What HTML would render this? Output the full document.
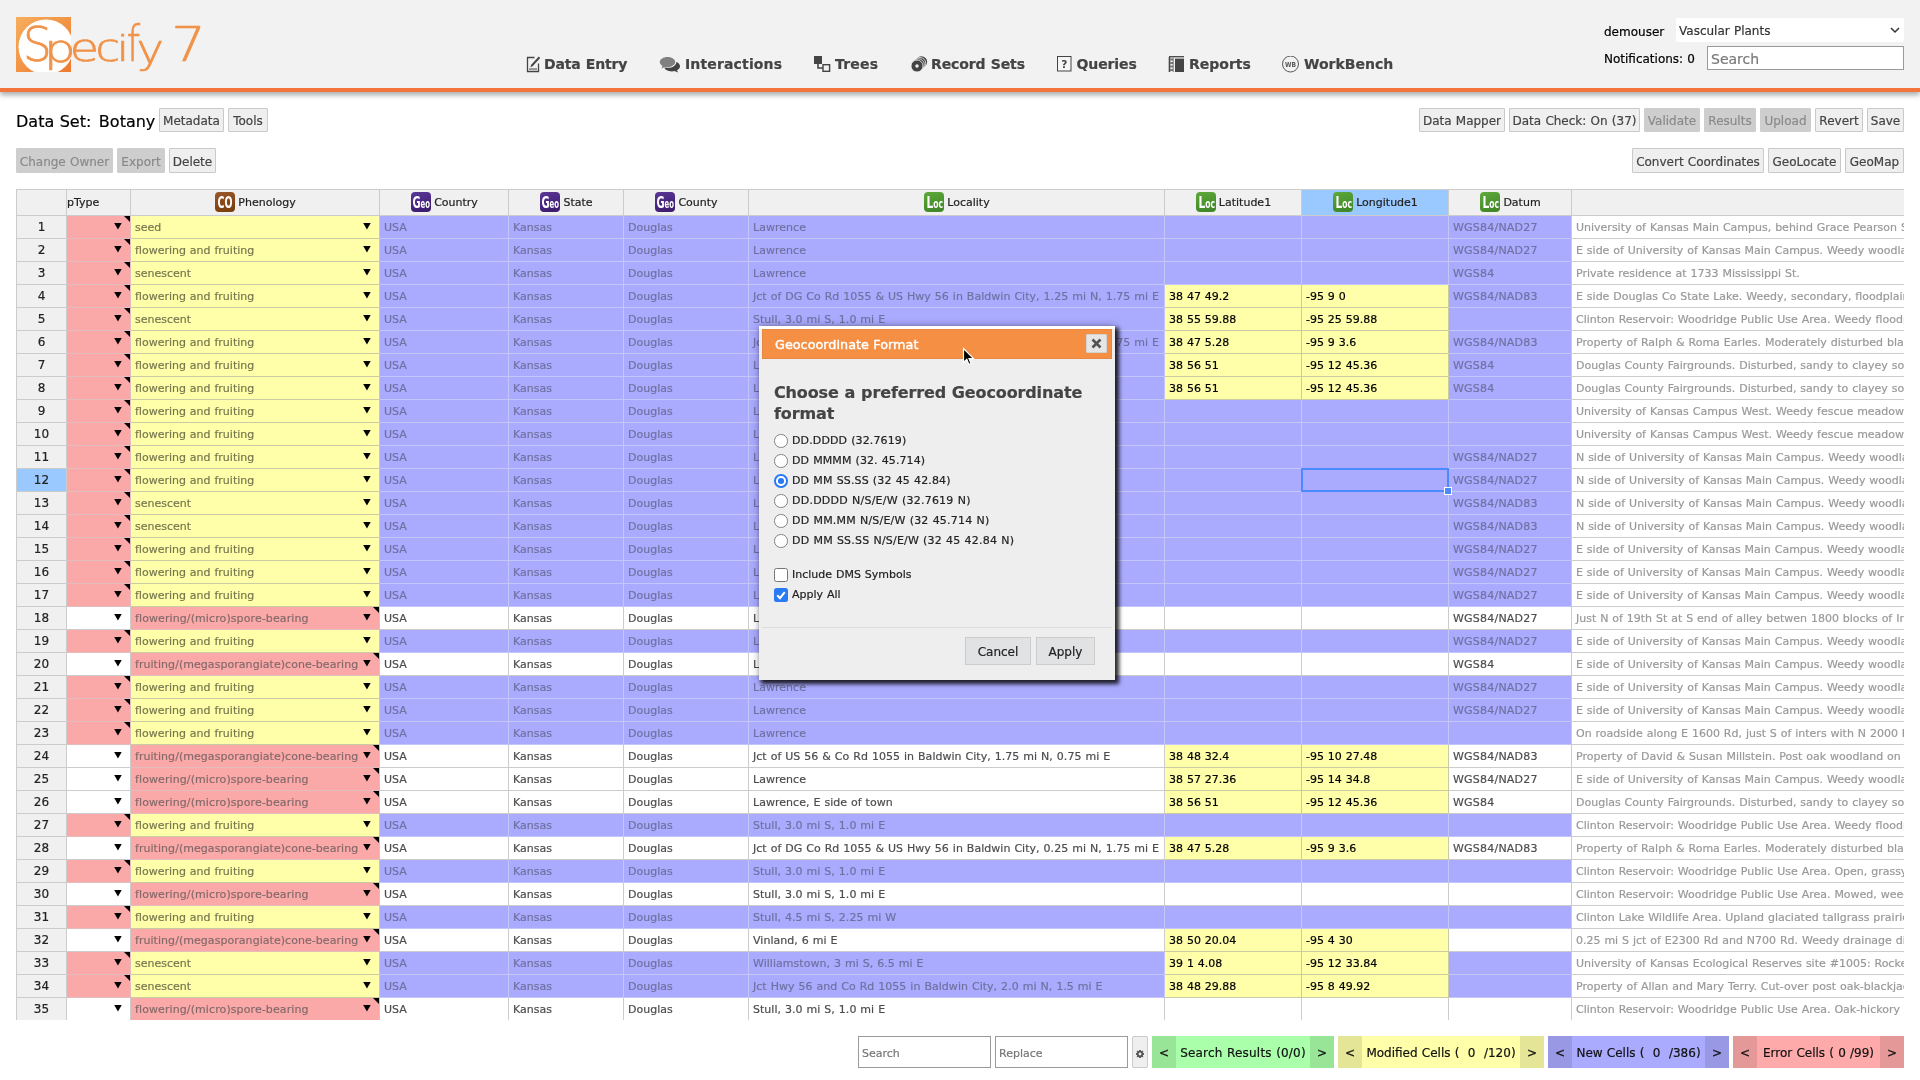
<!DOCTYPE html>
<html lang="en"><head><meta charset="utf-8"><title>Botany | Specify 7 WorkBench</title>
<style>
*{box-sizing:border-box}
html,body{margin:0;padding:0}
body{width:1920px;height:1080px;overflow:hidden;background:#fff;font-family:"DejaVu Sans","Liberation Sans",sans-serif;font-size:12px;color:#000;position:relative;word-spacing:.034em;-webkit-text-stroke:.2px}
#root{position:absolute;left:0;top:0;width:1920px;height:1080px;overflow:hidden;will-change:transform}
#hdr{position:absolute;left:0;top:0;width:1920px;height:92px;background:#f2f2f2;border-bottom:4px solid #f4753b;box-shadow:0 3px 5px rgba(60,70,70,.45)}
#logo{position:absolute;left:16px;top:17px}
#nav{position:absolute;top:53px;left:0;width:1920px;height:22px;font-weight:bold;font-size:14px;color:#444}
#nav a{position:absolute;top:0;line-height:22px;white-space:nowrap}
#nav svg{position:absolute;top:3px}
#user{position:absolute;font-size:12px}
.btn{position:absolute;height:24px;line-height:22px;border:1px solid #c9c9c9;background:#efefef;color:#444;font-size:12px;text-align:center;white-space:nowrap;border-radius:1px}
.btn.dis{background:#cecece;color:#8a8a8a;border-color:#cecece}
#title{position:absolute;left:16px;top:109px;font-size:16px;line-height:26px;white-space:nowrap}
/* grid */
#grid{position:absolute;left:16px;top:189px;width:1888px;height:831px;overflow:hidden}
table{border-collapse:separate;border-spacing:0;table-layout:fixed;width:2100px;font-size:11px}
th,td{height:23px;padding:0 4px;border-right:1px solid #ccc;border-bottom:1px solid #ccc;overflow:hidden;white-space:nowrap;text-align:left;font-weight:normal;line-height:21px;position:relative}
thead th{height:27px;background:#f0f0f0;border-top:1px solid #ccc;text-align:center;color:#222;line-height:25px}
th.rh{background:#f0f0f0;text-align:center;border-left:1px solid #ccc;font-size:12px;color:#222;padding:0}
th.rh.sel{background:#99c9ff}
thead th.selc{background:#99c9ff}
tr.n td{background:#aaaaff;color:#6f72a0;border-color:#c4c6f8}
tr.w td{background:#fff;color:#4d4d4d}
tr td.mo{background:#ffffaa;color:#77774f;border-color:#cbcba3}
tr td.er{background:#faa9a8;color:#856a6a;border-color:#e3bdbd}
tr td.k{color:#000}
tr td.ro{background:#fff;color:#999;border-color:#ccc}
td.dd i{position:absolute;right:8.3px;top:6.9px;width:7.5px;height:6.7px;background:#000;clip-path:polygon(0 0,100% 0,50% 100%)}
td.er:after{content:"";position:absolute;right:0;top:0;border-left:6px solid transparent;border-top:6px solid #000}
td.dt{letter-spacing:.22px}td.lc{letter-spacing:.035px}td.mic{letter-spacing:.1px}td.meg{letter-spacing:.05px}
.ic{display:inline-block;vertical-align:middle;margin-left:1px;margin-right:3px;position:relative;top:-1px}
#selbox{position:absolute;left:1301px;top:468px;width:148px;height:24px;border:2px solid #4b89ff}
#selh{position:absolute;left:1444px;top:487px;width:8px;height:8px;background:#4b89ff;border:1px solid #fff}

#uname{position:absolute;left:1604px;top:24px;font-size:12px;line-height:16px}
#coll{position:absolute;left:1676px;top:18px;width:228px;height:24px;background:#fff;border-radius:2px;font-size:12px;line-height:26px;padding-left:3px;color:#333}
#coll svg{position:absolute;right:4px;top:9px}
#notif{position:absolute;left:1604px;top:51px;font-size:12px;line-height:16px}
#hsearch{position:absolute;left:1707px;top:46px;width:197px;height:24px;background:#fff;border:1px solid #9a9a9a;font-size:14px;line-height:24px;padding-left:3px;color:#7a7a7a}
#bar{position:absolute;left:0;top:1036px;width:1920px;height:32px}
.inp{position:absolute;top:0;height:32px;background:#fff;border:1px solid #9a9a9a;font-size:11px;line-height:34px;padding-left:3px;color:#777}
.nv{position:absolute;top:0;height:32px;font-size:12px;line-height:34px;white-space:nowrap;text-align:center;color:#111}
.nv b{position:absolute;top:0;width:24px;height:32px;font-weight:normal;background:rgba(0,0,0,.1)}
.nv b.l{left:0}.nv b.r{right:0}
#dlg{position:absolute;left:759px;top:326px;width:356px;height:354px;background:#eee;box-shadow:3px 3px 4px 1px rgba(0,0,0,.8),0 0 8px rgba(0,0,0,.3);border-top:3px solid #fff}
#dlgt{position:absolute;left:3px;top:0;width:350px;height:30px;background:#f58f43;border:1px solid #e98845;color:#fff;font-size:12.8px;line-height:29px;padding-left:12px;-webkit-text-stroke:.4px}
#dlgx{position:absolute;left:323px;top:4px;width:21px;height:19px;background:#e6e6e6;border:1px solid #d3d3d3;border-radius:1px}
#dlg h2{position:absolute;left:15px;top:53px;margin:0;font-size:16px;line-height:21px;font-weight:bold;color:#444;width:330px;letter-spacing:-.13px}
.opt{position:absolute;left:33px;font-size:11px;line-height:14px;color:#222;white-space:nowrap}
.rad{position:absolute;left:15px;width:13.500px;height:13.500px;border-radius:50%;border:1.400px solid #808080;background:#fff}
.rad.on{border:2px solid #2a7af5}
.rad.on:after{content:"";position:absolute;left:2px;top:2px;width:5.500px;height:5.500px;border-radius:50%;background:#2a7af5}
.chk{position:absolute;left:15px;width:14px;height:14px;border-radius:2.5px;border:1.5px solid #777;background:#fff}
.chk.on{border:none;background:#2a7af5}
#dlgl{position:absolute;left:3px;top:298px;width:350px;height:1px;background:#ddd}
.dbtn{position:absolute;top:308px;height:28px;border:1px solid #ccc;background:#e1e2e3;color:#222;font-size:12px;line-height:28px;text-align:center}
</style></head><body><div id="root">
<div id="hdr">
<svg id="logo" width="200" height="60" viewBox="0 0 200 60">
<defs><linearGradient id="lg" x1="0" y1="0" x2="1" y2="1"><stop offset="0" stop-color="#f6ae5c"/><stop offset="1" stop-color="#ee7a30"/></linearGradient><clipPath id="lc"><rect x="0" y="0" width="55" height="55"/></clipPath></defs>
<rect x="0" y="0" width="55" height="55" fill="url(#lg)"/>
<circle cx="30" cy="30" r="27.5" fill="#fff" clip-path="url(#lc)"/>
<text font-family="'DejaVu Sans Light','DejaVu Sans',sans-serif" font-weight="200" fill="#f0934a" stroke="#f0934a" stroke-width="0.7"><tspan x="7.1" y="44.0" font-size="47.2" textLength="28.7" lengthAdjust="spacingAndGlyphs">S</tspan><tspan x="28.1" y="45.2" font-size="39.2" textLength="31.6" lengthAdjust="spacingAndGlyphs">p</tspan><tspan x="53.7" y="43.9" font-size="37.0" textLength="29.3" lengthAdjust="spacingAndGlyphs">e</tspan><tspan x="79.4" y="43.9" font-size="37.0" textLength="24.6" lengthAdjust="spacingAndGlyphs">c</tspan><tspan x="100.6" y="44.0" font-size="36.3" textLength="12.8" lengthAdjust="spacingAndGlyphs">i</tspan><tspan x="110.8" y="44.0" font-size="49.3" textLength="13.4" lengthAdjust="spacingAndGlyphs">f</tspan><tspan x="120.4" y="45.7" font-size="40.3" textLength="27.5" lengthAdjust="spacingAndGlyphs">y</tspan> <tspan x="155.2" y="44.0" font-size="47.9" textLength="34.6" lengthAdjust="spacingAndGlyphs">7</tspan></text>
</svg>
<div id="nav">
<svg style="left:526px" width="15" height="17" viewBox="0 0 15 17"><path d="M8.5 1.5H1.5v14h11V7.5" fill="none" stroke="#444" stroke-width="1.3"/><path d="M12.8 0.6l1.4 1.4-7.6 8.2-2.3 1 .9-2.4z" fill="#444"/><rect x="3" y="12" width="8" height="2" fill="#999"/></svg>
<a style="left:544px;letter-spacing:-.15px">Data Entry</a>
<svg style="left:659px" width="22" height="17" viewBox="0 0 22 17"><path d="M13 5c4.4 0 8 2.3 8 5.2 0 1.7-1.2 3.200-3.100 4.100l1.300 2.200-3.900-1.400c-.8.200-1.500.300-2.300.300-4.400 0-8-2.300-8-5.200s3.600-5.200 8-5.200z" fill="#444"/><path d="M8.700 0c4.800 0 8.700 2.600 8.700 5.900s-3.900 5.900-8.700 5.900c-1 0-2-.100-2.900-.300l-3.500 1.800 1-2.900c-2-1.100-3.300-2.700-3.300-4.500 0-3.300 3.900-5.900 8.700-5.900z" fill="#f2f2f2"/><path d="M8.500 1c4.200 0 7.700 2.300 7.700 5.100s-3.500 5.100-7.700 5.100c-1 0-1.900-.100-2.700-.300l-3.400 1.700 1.100-2.700c-1.700-.9-2.700-2.300-2.700-3.800 0-2.800 3.500-5.100 7.700-5.100z" fill="#808080"/></svg>
<a style="left:685px;letter-spacing:.15px">Interactions</a>
<svg style="left:814px" width="17" height="17" viewBox="0 0 17 17"><rect x="0" y="0" width="8" height="8" fill="#444"/><path d="M4 8v4h5" fill="none" stroke="#444" stroke-width="1.6"/><rect x="9" y="8.700" width="6.600" height="6.600" fill="#f2f2f2" stroke="#444" stroke-width="1.400"/></svg>
<a style="left:835px;letter-spacing:.2px">Trees</a>
<svg style="left:910px" width="18" height="17" viewBox="0 0 18 17"><circle cx="11.400" cy="6" r="5.800" fill="#444"/><circle cx="10" cy="7.300" r="5.800" fill="#444" stroke="#f2f2f2" stroke-width=".8"/><circle cx="8.500" cy="8.600" r="5.800" fill="#444" stroke="#f2f2f2" stroke-width=".8"/><circle cx="7" cy="10" r="6" fill="#444" stroke="#f2f2f2" stroke-width=".8"/><circle cx="7" cy="10" r="1.700" fill="#f2f2f2"/></svg>
<a style="left:931px;letter-spacing:-.1px">Record Sets</a>
<svg style="left:1057px" width="15" height="16" viewBox="0 0 15 16"><rect x=".5" y=".5" width="13.500" height="14.500" fill="#f5f5f5" stroke="#444" stroke-width="1"/><text x="7.200" y="12" font-family="'DejaVu Sans',sans-serif" font-weight="bold" font-size="10.500" fill="#444" text-anchor="middle">?</text></svg>
<a style="left:1076.500px;letter-spacing:-.1px">Queries</a>
<svg style="left:1168px" width="17" height="17" viewBox="0 0 17 17"><path d="M1 .700h15" stroke="#444" stroke-width="1.300"/><rect x="7" y="2.600" width="9" height="13.400" fill="#444"/><path d="M1.500 1v15" stroke="#444" stroke-width="1.600"/><path d="M1 3.500h4.500M1 7h4.500M1 10.500h4.500M1 14h4.500" stroke="#444" stroke-width="1.800" stroke-dasharray="1.500 .8"/><path d="M5.200 1.500v14.500" stroke="#777" stroke-width="1"/></svg>
<a style="left:1189px">Reports</a>
<svg style="left:1281px" width="19" height="19" viewBox="0 0 19 19" ><circle cx="9.500" cy="8" r="8" fill="none" stroke="#555" stroke-width="1"/><text x="9.500" y="10.600" font-family="'DejaVu Sans',sans-serif" font-weight="bold" font-size="6.800" fill="#555" text-anchor="middle" textLength="11" lengthAdjust="spacingAndGlyphs">WB</text></svg>
<a style="left:1304px">WorkBench</a>
</div>
<div id="uname">demouser</div>
<div id="coll">Vascular Plants<svg width="10" height="7" viewBox="0 0 10 7"><path d="M1 1l4 4 4-4" fill="none" stroke="#333" stroke-width="1.5"/></svg></div>
<div id="notif">Notifications: 0</div>
<div id="hsearch">Search</div>
</div>
<div id="title">Data Set<span style="letter-spacing:2px">:</span> Botany</div>
<div class="btn" style="left:159px;top:108px;height:24px;line-height:25px;width:65px">Metadata</div>
<div class="btn" style="left:228px;top:108px;height:24px;line-height:25px;width:40px">Tools</div>
<div class="btn" style="left:1419px;top:108px;height:24px;line-height:25px;width:86px">Data Mapper</div>
<div class="btn" style="left:1509px;top:108px;height:24px;line-height:25px;width:131px">Data Check: On (37)</div>
<div class="btn dis" style="left:1644px;top:108px;height:24px;line-height:25px;width:56px">Validate</div>
<div class="btn dis" style="left:1704px;top:108px;height:24px;line-height:25px;width:52px">Results</div>
<div class="btn dis" style="left:1760px;top:108px;height:24px;line-height:25px;width:51px">Upload</div>
<div class="btn" style="left:1815px;top:108px;height:24px;line-height:25px;width:48px">Revert</div>
<div class="btn" style="left:1867px;top:108px;height:24px;line-height:25px;width:37px">Save</div>
<div class="btn dis" style="left:16px;top:148px;height:25px;line-height:27px;width:97px">Change Owner</div>
<div class="btn dis" style="left:117px;top:148px;height:25px;line-height:27px;width:48px">Export</div>
<div class="btn" style="left:169px;top:148px;height:25px;line-height:27px;width:47px">Delete</div>
<div class="btn" style="left:1632px;top:148px;height:25px;line-height:27px;width:132px">Convert Coordinates</div>
<div class="btn" style="left:1768px;top:148px;height:25px;line-height:27px;width:73px">GeoLocate</div>
<div class="btn" style="left:1845px;top:148px;height:25px;line-height:27px;width:59px">GeoMap</div>
<div id="grid"><table>
<colgroup><col style="width:51px"><col style="width:64px"><col style="width:249px"><col style="width:129px"><col style="width:115px"><col style="width:125px"><col style="width:416px"><col style="width:137px"><col style="width:147px"><col style="width:123px"><col style="width:545px"></colgroup>
<thead><tr><th class="rh"></th><th style="text-align:left;padding:0">pType</th><th><svg class="ic" width="20" height="20" viewBox="0 0 20 20"><defs><linearGradient id="gCO1" x1="0" y1="0" x2="0.3" y2="1"><stop offset="0" stop-color="#99582a"/><stop offset="1" stop-color="#7d400f"/></linearGradient></defs><rect width="20" height="20" rx="4" fill="url(#gCO1)"/><text x="2.5" y="16" font-family="'DejaVu Sans Condensed','DejaVu Sans',sans-serif" font-weight="bold" fill="#fff" font-size="16.500" textLength="15" lengthAdjust="spacingAndGlyphs">CO</text></svg>Phenology</th><th><svg class="ic" width="20" height="20" viewBox="0 0 20 20"><defs><linearGradient id="gGeo1" x1="0" y1="0" x2="0.3" y2="1"><stop offset="0" stop-color="#5b3797"/><stop offset="1" stop-color="#3f1e72"/></linearGradient></defs><rect width="20" height="20" rx="4" fill="url(#gGeo1)"/><text x="1.5" y="16" font-family="'DejaVu Sans Condensed','DejaVu Sans',sans-serif" font-weight="bold" fill="#fff" font-size="16.500" textLength="17.500" lengthAdjust="spacingAndGlyphs">G<tspan font-size="11.500">eo</tspan></text></svg>Country</th><th><svg class="ic" width="20" height="20" viewBox="0 0 20 20"><defs><linearGradient id="gGeo2" x1="0" y1="0" x2="0.3" y2="1"><stop offset="0" stop-color="#5b3797"/><stop offset="1" stop-color="#3f1e72"/></linearGradient></defs><rect width="20" height="20" rx="4" fill="url(#gGeo2)"/><text x="1.5" y="16" font-family="'DejaVu Sans Condensed','DejaVu Sans',sans-serif" font-weight="bold" fill="#fff" font-size="16.500" textLength="17.500" lengthAdjust="spacingAndGlyphs">G<tspan font-size="11.500">eo</tspan></text></svg>State</th><th><svg class="ic" width="20" height="20" viewBox="0 0 20 20"><defs><linearGradient id="gGeo3" x1="0" y1="0" x2="0.3" y2="1"><stop offset="0" stop-color="#5b3797"/><stop offset="1" stop-color="#3f1e72"/></linearGradient></defs><rect width="20" height="20" rx="4" fill="url(#gGeo3)"/><text x="1.5" y="16" font-family="'DejaVu Sans Condensed','DejaVu Sans',sans-serif" font-weight="bold" fill="#fff" font-size="16.500" textLength="17.500" lengthAdjust="spacingAndGlyphs">G<tspan font-size="11.500">eo</tspan></text></svg>County</th><th><svg class="ic" width="20" height="20" viewBox="0 0 20 20"><defs><linearGradient id="gLoc1" x1="0" y1="0" x2="0.3" y2="1"><stop offset="0" stop-color="#5daa3a"/><stop offset="1" stop-color="#43892a"/></linearGradient></defs><rect width="20" height="20" rx="4" fill="url(#gLoc1)"/><text x="2.500" y="15.500" font-family="'DejaVu Sans Condensed','DejaVu Sans',sans-serif" font-weight="bold" fill="#fff" font-size="16" textLength="16.500" lengthAdjust="spacingAndGlyphs">L<tspan font-size="11.500">oc</tspan></text></svg>Locality</th><th><svg class="ic" width="20" height="20" viewBox="0 0 20 20"><defs><linearGradient id="gLoc2" x1="0" y1="0" x2="0.3" y2="1"><stop offset="0" stop-color="#5daa3a"/><stop offset="1" stop-color="#43892a"/></linearGradient></defs><rect width="20" height="20" rx="4" fill="url(#gLoc2)"/><text x="2.500" y="15.500" font-family="'DejaVu Sans Condensed','DejaVu Sans',sans-serif" font-weight="bold" fill="#fff" font-size="16" textLength="16.500" lengthAdjust="spacingAndGlyphs">L<tspan font-size="11.500">oc</tspan></text></svg>Latitude1</th><th class="selc"><svg class="ic" width="20" height="20" viewBox="0 0 20 20"><defs><linearGradient id="gLoc3" x1="0" y1="0" x2="0.3" y2="1"><stop offset="0" stop-color="#5daa3a"/><stop offset="1" stop-color="#43892a"/></linearGradient></defs><rect width="20" height="20" rx="4" fill="url(#gLoc3)"/><text x="2.500" y="15.500" font-family="'DejaVu Sans Condensed','DejaVu Sans',sans-serif" font-weight="bold" fill="#fff" font-size="16" textLength="16.500" lengthAdjust="spacingAndGlyphs">L<tspan font-size="11.500">oc</tspan></text></svg>Longitude1</th><th><svg class="ic" width="20" height="20" viewBox="0 0 20 20"><defs><linearGradient id="gLoc4" x1="0" y1="0" x2="0.3" y2="1"><stop offset="0" stop-color="#5daa3a"/><stop offset="1" stop-color="#43892a"/></linearGradient></defs><rect width="20" height="20" rx="4" fill="url(#gLoc4)"/><text x="2.500" y="15.500" font-family="'DejaVu Sans Condensed','DejaVu Sans',sans-serif" font-weight="bold" fill="#fff" font-size="16" textLength="16.500" lengthAdjust="spacingAndGlyphs">L<tspan font-size="11.500">oc</tspan></text></svg>Datum</th><th></th></tr></thead>
<tbody>
<tr class="n"><th class="rh">1</th><td class="er dd"><i></i></td><td class="mo dd seed">seed<i></i></td><td>USA</td><td>Kansas</td><td>Douglas</td><td class="lc">Lawrence</td><td></td><td></td><td class="dt">WGS84/NAD27</td><td class="ro">University of Kansas Main Campus, behind Grace Pearson Scholarship Hall</td></tr>
<tr class="n"><th class="rh">2</th><td class="er dd"><i></i></td><td class="mo dd ff">flowering and fruiting<i></i></td><td>USA</td><td>Kansas</td><td>Douglas</td><td class="lc">Lawrence</td><td></td><td></td><td class="dt">WGS84/NAD27</td><td class="ro">E side of University of Kansas Main Campus. Weedy woodland along ridge</td></tr>
<tr class="n"><th class="rh">3</th><td class="er dd"><i></i></td><td class="mo dd sen">senescent<i></i></td><td>USA</td><td>Kansas</td><td>Douglas</td><td class="lc">Lawrence</td><td></td><td></td><td class="dt">WGS84</td><td class="ro">Private residence at 1733 Mississippi St.</td></tr>
<tr class="n"><th class="rh">4</th><td class="er dd"><i></i></td><td class="mo dd ff">flowering and fruiting<i></i></td><td>USA</td><td>Kansas</td><td>Douglas</td><td class="lc">Jct of DG Co Rd 1055 &amp; US Hwy 56 in Baldwin City, 1.25 mi N, 1.75 mi E</td><td class="mo k">38 47 49.2</td><td class="mo k">-95 9 0</td><td class="dt">WGS84/NAD83</td><td class="ro">E side Douglas Co State Lake. Weedy, secondary, floodplain woodland</td></tr>
<tr class="n"><th class="rh">5</th><td class="er dd"><i></i></td><td class="mo dd sen">senescent<i></i></td><td>USA</td><td>Kansas</td><td>Douglas</td><td class="lc">Stull, 3.0 mi S, 1.0 mi E</td><td class="mo k">38 55 59.88</td><td class="mo k">-95 25 59.88</td><td class="dt"></td><td class="ro">Clinton Reservoir: Woodridge Public Use Area. Weedy floodplain woods</td></tr>
<tr class="n"><th class="rh">6</th><td class="er dd"><i></i></td><td class="mo dd ff">flowering and fruiting<i></i></td><td>USA</td><td>Kansas</td><td>Douglas</td><td class="lc">Jct of DG Co Rd 1055 &amp; US Hwy 56 in Baldwin City, 0.25 mi N, 1.75 mi E</td><td class="mo k">38 47 5.28</td><td class="mo k">-95 9 3.6</td><td class="dt">WGS84/NAD83</td><td class="ro">Property of Ralph &amp; Roma Earles. Moderately disturbed blackjack oak woods</td></tr>
<tr class="n"><th class="rh">7</th><td class="er dd"><i></i></td><td class="mo dd ff">flowering and fruiting<i></i></td><td>USA</td><td>Kansas</td><td>Douglas</td><td class="lc">Lawrence</td><td class="mo k">38 56 51</td><td class="mo k">-95 12 45.36</td><td class="dt">WGS84</td><td class="ro">Douglas County Fairgrounds. Disturbed, sandy to clayey soil along drive</td></tr>
<tr class="n"><th class="rh">8</th><td class="er dd"><i></i></td><td class="mo dd ff">flowering and fruiting<i></i></td><td>USA</td><td>Kansas</td><td>Douglas</td><td class="lc">Lawrence</td><td class="mo k">38 56 51</td><td class="mo k">-95 12 45.36</td><td class="dt">WGS84</td><td class="ro">Douglas County Fairgrounds. Disturbed, sandy to clayey soil along drive</td></tr>
<tr class="n"><th class="rh">9</th><td class="er dd"><i></i></td><td class="mo dd ff">flowering and fruiting<i></i></td><td>USA</td><td>Kansas</td><td>Douglas</td><td class="lc">Lawrence</td><td></td><td></td><td class="dt"></td><td class="ro">University of Kansas Campus West. Weedy fescue meadow and roadside</td></tr>
<tr class="n"><th class="rh">10</th><td class="er dd"><i></i></td><td class="mo dd ff">flowering and fruiting<i></i></td><td>USA</td><td>Kansas</td><td>Douglas</td><td class="lc">Lawrence</td><td></td><td></td><td class="dt"></td><td class="ro">University of Kansas Campus West. Weedy fescue meadow and roadside</td></tr>
<tr class="n"><th class="rh">11</th><td class="er dd"><i></i></td><td class="mo dd ff">flowering and fruiting<i></i></td><td>USA</td><td>Kansas</td><td>Douglas</td><td class="lc">Lawrence</td><td></td><td></td><td class="dt">WGS84/NAD27</td><td class="ro">N side of University of Kansas Main Campus. Weedy woodland along ridge</td></tr>
<tr class="n"><th class="rh sel">12</th><td class="er dd"><i></i></td><td class="mo dd ff">flowering and fruiting<i></i></td><td>USA</td><td>Kansas</td><td>Douglas</td><td class="lc">Lawrence</td><td></td><td class="cur"><b></b></td><td class="dt">WGS84/NAD27</td><td class="ro">N side of University of Kansas Main Campus. Weedy woodland along ridge</td></tr>
<tr class="n"><th class="rh">13</th><td class="er dd"><i></i></td><td class="mo dd sen">senescent<i></i></td><td>USA</td><td>Kansas</td><td>Douglas</td><td class="lc">Lawrence</td><td></td><td></td><td class="dt">WGS84/NAD83</td><td class="ro">N side of University of Kansas Main Campus. Weedy woodland along ridge</td></tr>
<tr class="n"><th class="rh">14</th><td class="er dd"><i></i></td><td class="mo dd sen">senescent<i></i></td><td>USA</td><td>Kansas</td><td>Douglas</td><td class="lc">Lawrence</td><td></td><td></td><td class="dt">WGS84/NAD83</td><td class="ro">N side of University of Kansas Main Campus. Weedy woodland along ridge</td></tr>
<tr class="n"><th class="rh">15</th><td class="er dd"><i></i></td><td class="mo dd ff">flowering and fruiting<i></i></td><td>USA</td><td>Kansas</td><td>Douglas</td><td class="lc">Lawrence</td><td></td><td></td><td class="dt">WGS84/NAD27</td><td class="ro">E side of University of Kansas Main Campus. Weedy woodland along ridge</td></tr>
<tr class="n"><th class="rh">16</th><td class="er dd"><i></i></td><td class="mo dd ff">flowering and fruiting<i></i></td><td>USA</td><td>Kansas</td><td>Douglas</td><td class="lc">Lawrence</td><td></td><td></td><td class="dt">WGS84/NAD27</td><td class="ro">E side of University of Kansas Main Campus. Weedy woodland along ridge</td></tr>
<tr class="n"><th class="rh">17</th><td class="er dd"><i></i></td><td class="mo dd ff">flowering and fruiting<i></i></td><td>USA</td><td>Kansas</td><td>Douglas</td><td class="lc">Lawrence</td><td></td><td></td><td class="dt">WGS84/NAD27</td><td class="ro">E side of University of Kansas Main Campus. Weedy woodland along ridge</td></tr>
<tr class="w"><th class="rh">18</th><td class=" dd"><i></i></td><td class="er dd mic">flowering/(micro)spore-bearing<i></i></td><td>USA</td><td>Kansas</td><td>Douglas</td><td class="lc">Lawrence</td><td></td><td></td><td class="dt">WGS84/NAD27</td><td class="ro">Just N of 19th St at S end of alley betwen 1800 blocks of Indiana and Mississippi</td></tr>
<tr class="n"><th class="rh">19</th><td class="er dd"><i></i></td><td class="mo dd ff">flowering and fruiting<i></i></td><td>USA</td><td>Kansas</td><td>Douglas</td><td class="lc">Lawrence</td><td></td><td></td><td class="dt">WGS84/NAD27</td><td class="ro">E side of University of Kansas Main Campus. Weedy woodland along ridge</td></tr>
<tr class="w"><th class="rh">20</th><td class=" dd"><i></i></td><td class="er dd meg">fruiting/(megasporangiate)cone-bearing<i></i></td><td>USA</td><td>Kansas</td><td>Douglas</td><td class="lc">Lawrence</td><td></td><td></td><td class="dt">WGS84</td><td class="ro">E side of University of Kansas Main Campus. Weedy woodland along ridge</td></tr>
<tr class="n"><th class="rh">21</th><td class="er dd"><i></i></td><td class="mo dd ff">flowering and fruiting<i></i></td><td>USA</td><td>Kansas</td><td>Douglas</td><td class="lc">Lawrence</td><td></td><td></td><td class="dt">WGS84/NAD27</td><td class="ro">E side of University of Kansas Main Campus. Weedy woodland along ridge</td></tr>
<tr class="n"><th class="rh">22</th><td class="er dd"><i></i></td><td class="mo dd ff">flowering and fruiting<i></i></td><td>USA</td><td>Kansas</td><td>Douglas</td><td class="lc">Lawrence</td><td></td><td></td><td class="dt">WGS84/NAD27</td><td class="ro">E side of University of Kansas Main Campus. Weedy woodland along ridge</td></tr>
<tr class="n"><th class="rh">23</th><td class="er dd"><i></i></td><td class="mo dd ff">flowering and fruiting<i></i></td><td>USA</td><td>Kansas</td><td>Douglas</td><td class="lc">Lawrence</td><td></td><td></td><td class="dt"></td><td class="ro">On roadside along E 1600 Rd, just S of inters with N 2000 Rd.</td></tr>
<tr class="w"><th class="rh">24</th><td class=" dd"><i></i></td><td class="er dd meg">fruiting/(megasporangiate)cone-bearing<i></i></td><td>USA</td><td>Kansas</td><td>Douglas</td><td class="lc">Jct of US 56 &amp; Co Rd 1055 in Baldwin City, 1.75 mi N, 0.75 mi E</td><td class="mo k">38 48 32.4</td><td class="mo k">-95 10 27.48</td><td class="dt">WGS84/NAD83</td><td class="ro">Property of David &amp; Susan Millstein. Post oak woodland on rocky slope</td></tr>
<tr class="w"><th class="rh">25</th><td class=" dd"><i></i></td><td class="er dd mic">flowering/(micro)spore-bearing<i></i></td><td>USA</td><td>Kansas</td><td>Douglas</td><td class="lc">Lawrence</td><td class="mo k">38 57 27.36</td><td class="mo k">-95 14 34.8</td><td class="dt">WGS84/NAD27</td><td class="ro">E side of University of Kansas Main Campus. Weedy woodland along ridge</td></tr>
<tr class="w"><th class="rh">26</th><td class=" dd"><i></i></td><td class="er dd mic">flowering/(micro)spore-bearing<i></i></td><td>USA</td><td>Kansas</td><td>Douglas</td><td class="lc">Lawrence, E side of town</td><td class="mo k">38 56 51</td><td class="mo k">-95 12 45.36</td><td class="dt">WGS84</td><td class="ro">Douglas County Fairgrounds. Disturbed, sandy to clayey soil along drive</td></tr>
<tr class="n"><th class="rh">27</th><td class="er dd"><i></i></td><td class="mo dd ff">flowering and fruiting<i></i></td><td>USA</td><td>Kansas</td><td>Douglas</td><td class="lc">Stull, 3.0 mi S, 1.0 mi E</td><td></td><td></td><td class="dt"></td><td class="ro">Clinton Reservoir: Woodridge Public Use Area. Weedy floodplain woods</td></tr>
<tr class="w"><th class="rh">28</th><td class=" dd"><i></i></td><td class="er dd meg">fruiting/(megasporangiate)cone-bearing<i></i></td><td>USA</td><td>Kansas</td><td>Douglas</td><td class="lc">Jct of DG Co Rd 1055 &amp; US Hwy 56 in Baldwin City, 0.25 mi N, 1.75 mi E</td><td class="mo k">38 47 5.28</td><td class="mo k">-95 9 3.6</td><td class="dt">WGS84/NAD83</td><td class="ro">Property of Ralph &amp; Roma Earles. Moderately disturbed blackjack oak woods</td></tr>
<tr class="n"><th class="rh">29</th><td class="er dd"><i></i></td><td class="mo dd ff">flowering and fruiting<i></i></td><td>USA</td><td>Kansas</td><td>Douglas</td><td class="lc">Stull, 3.0 mi S, 1.0 mi E</td><td></td><td></td><td class="dt"></td><td class="ro">Clinton Reservoir: Woodridge Public Use Area. Open, grassy field near lake</td></tr>
<tr class="w"><th class="rh">30</th><td class=" dd"><i></i></td><td class="er dd mic">flowering/(micro)spore-bearing<i></i></td><td>USA</td><td>Kansas</td><td>Douglas</td><td class="lc">Stull, 3.0 mi S, 1.0 mi E</td><td></td><td></td><td class="dt"></td><td class="ro">Clinton Reservoir: Woodridge Public Use Area. Mowed, weedy roadside</td></tr>
<tr class="n"><th class="rh">31</th><td class="er dd"><i></i></td><td class="mo dd ff">flowering and fruiting<i></i></td><td>USA</td><td>Kansas</td><td>Douglas</td><td class="lc">Stull, 4.5 mi S, 2.25 mi W</td><td></td><td></td><td class="dt"></td><td class="ro">Clinton Lake Wildlife Area. Upland glaciated tallgrass prairie remnant</td></tr>
<tr class="w"><th class="rh">32</th><td class=" dd"><i></i></td><td class="er dd meg">fruiting/(megasporangiate)cone-bearing<i></i></td><td>USA</td><td>Kansas</td><td>Douglas</td><td class="lc">Vinland, 6 mi E</td><td class="mo k">38 50 20.04</td><td class="mo k">-95 4 30</td><td class="dt"></td><td class="ro">0.25 mi S jct of E2300 Rd and N700 Rd. Weedy drainage ditch</td></tr>
<tr class="n"><th class="rh">33</th><td class="er dd"><i></i></td><td class="mo dd sen">senescent<i></i></td><td>USA</td><td>Kansas</td><td>Douglas</td><td class="lc">Williamstown, 3 mi S, 6.5 mi E</td><td class="mo k">39 1 4.08</td><td class="mo k">-95 12 33.84</td><td class="dt"></td><td class="ro">University of Kansas Ecological Reserves site #1005: Rockefeller Tract</td></tr>
<tr class="n"><th class="rh">34</th><td class="er dd"><i></i></td><td class="mo dd sen">senescent<i></i></td><td>USA</td><td>Kansas</td><td>Douglas</td><td class="lc">Jct Hwy 56 and Co Rd 1055 in Baldwin City, 2.0 mi N, 1.5 mi E</td><td class="mo k">38 48 29.88</td><td class="mo k">-95 8 49.92</td><td class="dt"></td><td class="ro">Property of Allan and Mary Terry. Cut-over post oak-blackjack oak woods</td></tr>
<tr class="w"><th class="rh">35</th><td class=" dd"><i></i></td><td class="er dd mic">flowering/(micro)spore-bearing<i></i></td><td>USA</td><td>Kansas</td><td>Douglas</td><td class="lc">Stull, 3.0 mi S, 1.0 mi E</td><td></td><td></td><td class="dt"></td><td class="ro">Clinton Reservoir: Woodridge Public Use Area. Oak-hickory woods</td></tr>
</tbody></table></div>
<div id="selbox"></div><div id="selh"></div>
<div id="bar">
<div class="inp" style="left:858px;width:133px">Search</div>
<div class="inp" style="left:995px;width:133px">Replace</div>
<div class="btn" style="left:1132px;top:0;width:16px;height:32px;border-radius:2px"><svg width="10" height="10" viewBox="-5 -5 10 10" style="position:absolute;left:2px;top:12px"><g fill="#555"><rect x="-0.9" y="-4" width="1.8" height="2" transform="rotate(0)"/><rect x="-0.9" y="-4" width="1.8" height="2" transform="rotate(45)"/><rect x="-0.9" y="-4" width="1.8" height="2" transform="rotate(90)"/><rect x="-0.9" y="-4" width="1.8" height="2" transform="rotate(135)"/><rect x="-0.9" y="-4" width="1.8" height="2" transform="rotate(180)"/><rect x="-0.9" y="-4" width="1.8" height="2" transform="rotate(225)"/><rect x="-0.9" y="-4" width="1.8" height="2" transform="rotate(270)"/><rect x="-0.9" y="-4" width="1.8" height="2" transform="rotate(315)"/></g><circle r="2.3" fill="none" stroke="#555" stroke-width="1.7"/></svg></div>
<div class="nv" style="left:1152px;width:182px;background:#aaffaa"><b class="l">&lt;</b><span style="letter-spacing:.2px">Search Results (0/0)</span><b class="r">&gt;</b></div>
<div class="nv" style="left:1338px;width:206px;background:#ffffaa"><b class="l">&lt;</b>Modified Cells (&nbsp; 0&nbsp; /120)<b class="r">&gt;</b></div>
<div class="nv" style="left:1548px;width:181px;background:#aaaaff"><b class="l">&lt;</b>New Cells (&nbsp; 0&nbsp; /386)<b class="r">&gt;</b></div>
<div class="nv" style="left:1733px;width:171px;background:#ffaaaa"><b class="l">&lt;</b>Error Cells ( 0 /99)<b class="r">&gt;</b></div>
</div>
<div id="dlg">
<div id="dlgt">Geocoordinate Format<div id="dlgx"><svg width="11" height="11" viewBox="0 0 11 11" style="position:absolute;left:4px;top:3px"><path d="M1.5 1.5l8 8M9.500 1.500l-8 8" stroke="#555" stroke-width="2.600"/></svg></div></div>
<h2>Choose a preferred Geocoordinate format</h2>
<span class="rad" style="top:105px"></span><span class="opt" style="top:105px;letter-spacing:0.12px">DD.DDDD (32.7619)</span>
<span class="rad" style="top:125px"></span><span class="opt" style="top:125px;letter-spacing:0.1px">DD MMMM (32. 45.714)</span>
<span class="rad on" style="top:145px"></span><span class="opt" style="top:145px;letter-spacing:0.15px">DD MM SS.SS (32 45 42.84)</span>
<span class="rad" style="top:165px"></span><span class="opt" style="top:165px;letter-spacing:0.23px">DD.DDDD N/S/E/W (32.7619 N)</span>
<span class="rad" style="top:185px"></span><span class="opt" style="top:185px;letter-spacing:0.2px">DD MM.MM N/S/E/W (32 45.714 N)</span>
<span class="rad" style="top:205px"></span><span class="opt" style="top:205px;letter-spacing:0.2px">DD MM SS.SS N/S/E/W (32 45 42.84 N)</span>
<span class="chk" style="top:239px"></span><span class="opt" style="top:239px">Include DMS Symbols</span>
<span class="chk on" style="top:259px"><svg width="14" height="14" viewBox="0 0 13 13"><path d="M3 6.800l2.500 2.600L10 3.800" fill="none" stroke="#fff" stroke-width="1.900"/></svg></span><span class="opt" style="top:259px">Apply All</span>
<div id="dlgl"></div>
<div class="dbtn" style="left:206px;width:66px">Cancel</div>
<div class="dbtn" style="left:277px;width:59px">Apply</div>
</div>
<svg width="14" height="20" viewBox="0 0 14 20" style="position:absolute;left:962px;top:347px"><path d="M1.5 1.5v14l3.3-3.1 2.1 5 2.2-.9-2.1-4.9h4.5z" fill="#000" stroke="#fff" stroke-width="1.2"/></svg>
</div></body></html>
